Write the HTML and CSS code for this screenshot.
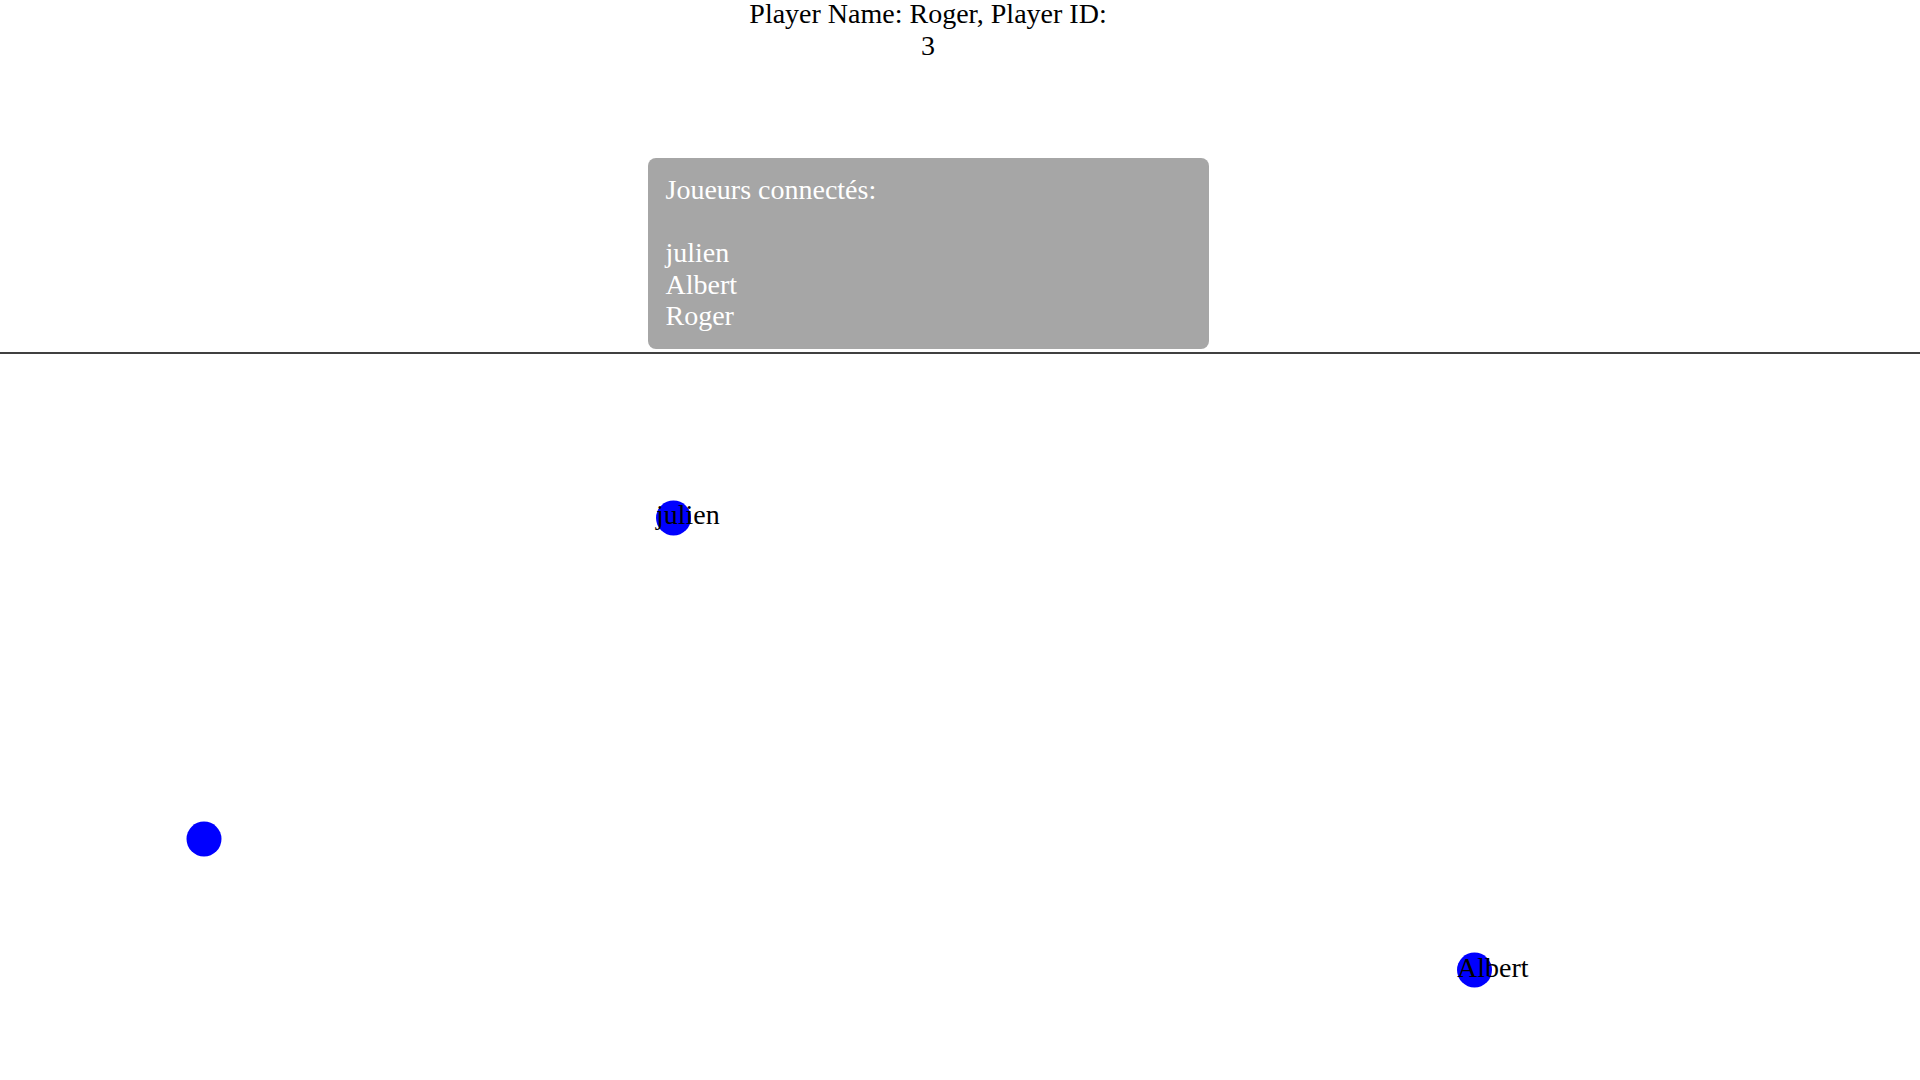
FILE: index.html
```html
<!DOCTYPE html>
<html lang="fr">
<head>
<meta charset="utf-8">
<title>Game</title>
<link rel="stylesheet" href="styles.css">
</head>
<body>
<div class="top">
  <div class="title">Player Name: Roger, Player ID: 3</div>
  <div class="players">
    Joueurs connectés:<br><br>
    julien<br>
    Albert<br>
    Roger
  </div>
</div>
<div class="arena">
  <svg class="field" width="1920" height="726" viewBox="0 0 1920 726">
    <circle cx="673.5" cy="164" r="17.5" fill="#0000ff"/>
    <text x="656" y="170" class="label">julien</text>
    <circle cx="1474.5" cy="616" r="17.5" fill="#0000ff"/>
    <text x="1457" y="623" class="label">Albert</text>
    <circle cx="204" cy="485" r="17.5" fill="#0000ff"/>
  </svg>
</div>
</body>
</html>
```
FILE: styles.css
```css
html, body {
  margin: 0;
  padding: 0;
  background: #ffffff;
  overflow: hidden;
}
body {
  font-family: "Liberation Serif", "Times New Roman", serif;
  color: #000000;
}
.top {
  width: 1856px;
  display: flex;
  flex-direction: column;
  align-items: center;
}
.title {
  width: 370px;
  text-align: center;
  font-size: 28px;
  line-height: 32px;
  margin-top: -2px;
}
.players {
  box-sizing: border-box;
  width: 561px;
  margin-top: 96px;
  margin-bottom: 3px;
  padding: 16px 18px 17px;
  background: #a6a6a6;
  color: #ffffff;
  border-radius: 8px;
  font-size: 28px;
  line-height: 31.6px;
}
.arena {
  border-top: 2px solid #404040;
  height: 726px;
}
.field {
  display: block;
}
.label {
  font-family: "Liberation Serif", "Times New Roman", serif;
  font-size: 28px;
  fill: #000000;
}
```
